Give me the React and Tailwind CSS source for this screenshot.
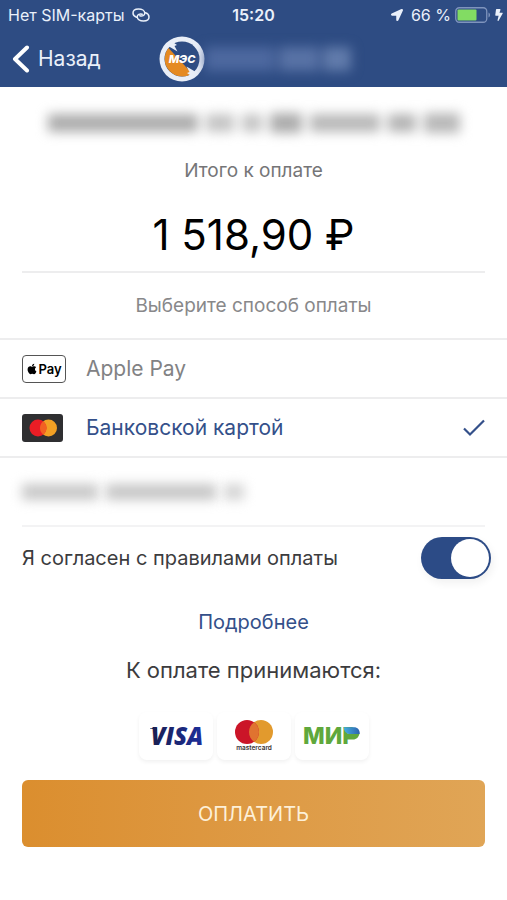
import React, { useState } from 'react';
import { FaApple, FaBolt, FaLocationArrow } from 'react-icons/fa';

function StatusBar() {
    return (
        <div className="grid grid-cols-3 items-center h-[30px] px-2 text-base">
            <div className="flex items-center gap-2 whitespace-nowrap">
                <span>Нет SIM-карты</span>
                <svg viewBox="0 0 18 14" className="w-[18px] h-[14px] shrink-0" fill="none" stroke="currentColor" strokeWidth="1.5" strokeLinecap="round">
                    <path d="M4.500 9.200C2.400 8.500 1 7 1 5 1 2.500 3.400 1 6.500 1c3.400 0 6.300 1.700 6.300 4.200 0 2.300-2.600 3.400-5 2.600" />
                    <path d="M13.500 4.800C15.600 5.500 17 7 17 9c0 2.500-2.400 4-5.500 4-3.400 0-6.300-1.700-6.300-4.200 0-2.300 2.600-3.400 5-2.600" />
                </svg>
            </div>
            <span className="text-center font-semibold">15:20</span>
            <div className="flex items-center justify-end gap-1 whitespace-nowrap -mr-1">
                <FaLocationArrow className="w-3 h-3 mr-1" />
                <span>66 %</span>
                <svg viewBox="0 0 36 16" className="w-9 h-4 shrink-0">
                    <rect x="0.750" y="0.750" width="31" height="14.500" rx="3.500" fill="none" stroke="#7f94bd" strokeWidth="1.300" />
                    <rect x="2.500" y="2.500" width="19" height="11" rx="1" fill="#82dc63" />
                    <path d="M33.500 5.500c2 .8 2 4.200 0 5z" fill="#7f94bd" />
                </svg>
                <FaBolt className="w-2 h-3" />
            </div>
        </div>
    );
}

function MesLogo() {
    return (
        <svg viewBox="0 0 46 46" className="w-[46px] h-[46px]" role="img" aria-label="МЭС">
            <circle cx="23" cy="23" r="22.500" fill="#e9eef7" />
            <circle cx="23" cy="23" r="17.500" fill="#2e4c83" />
            <path d="M9.500 12A17.500 17.500 0 0 0 33 37.400z" fill="#e58a22" />
            <path d="M8 10l5-4.500 5 3.500-2.500 1 3 5.500-8.500-5zM38 36l-5 4.500-5-3.500 2.500-1-3-5.500 8.500 5z" fill="#e9eef7" />
            <text x="23" y="27" textAnchor="middle" fontFamily="Inter, sans-serif" fontSize="11" fontWeight="800" fontStyle="italic" fill="#fff">МЭС</text>
        </svg>
    );
}

function CardIcon() {
    return (
        <svg viewBox="0 0 41 28" className="w-[41px] h-7">
            <rect width="41" height="28" rx="3" fill="#2f2f31" />
            <circle cx="26.500" cy="14" r="8.500" fill="#f2a024" />
            <circle cx="16" cy="14" r="8.500" fill="#ea1d25" />
            <path d="M21.250 7.300a8.500 8.500 0 0 1 0 13.400 8.500 8.500 0 0 1 0-13.400z" fill="#f26122" />
        </svg>
    );
}

function ApplePayIcon() {
    return (
        <span className="flex items-center justify-center w-11 h-7 border border-[#555] rounded text-black">
            <FaApple className="w-3 h-3" />
            <span className="text-[13px] leading-4 font-semibold">Pay</span>
        </span>
    );
}

function VisaLogo() {
    return (
        <svg viewBox="0 0 64 40" className="w-16 h-10" role="img" aria-label="Visa">
            <defs>
                <linearGradient id="visa" x1="0" x2="1">
                    <stop offset="0" stopColor="#191f4f" />
                    <stop offset="1" stopColor="#1c2f9c" />
                </linearGradient>
            </defs>
            <path d="M6 12h7v3c-2-1.300-4.500-2.200-7-2.500z" fill="#191f4f" />
            <text x="33" y="29" textAnchor="middle" fontFamily="'Open Sans', sans-serif" fontSize="24" fontWeight="800" fontStyle="italic" fill="url(#visa)">VISA</text>
        </svg>
    );
}

function MastercardLogo() {
    return (
        <svg viewBox="0 0 48 40" className="w-12 h-10" role="img" aria-label="Mastercard">
            <circle cx="31" cy="16" r="12" fill="#e29a2d" />
            <circle cx="17" cy="16" r="12" fill="#cb1528" />
            <path d="M24 6.250a12 12 0 0 1 0 19.500 12 12 0 0 1 0-19.500z" fill="#e07330" />
            <text x="24" y="34" textAnchor="middle" fontFamily="Inter, sans-serif" fontSize="6.500" fontWeight="600" fill="#3a3434">mastercard</text>
        </svg>
    );
}

function MirLogo() {
    return (
        <svg viewBox="0 0 66 40" className="w-[66px] h-10" role="img" aria-label="МИР">
            <defs>
                <linearGradient id="mir" x1="0" x2="1">
                    <stop offset="0" stopColor="#45b0e0" />
                    <stop offset="1" stopColor="#2c62ad" />
                </linearGradient>
            </defs>
            <text x="4" y="28" fontFamily="Inter, sans-serif" fontSize="23" fontWeight="800" fill="#5fa83c">МИР</text>
            <path d="M46 17.500h14.500c-.8 3.700-3 6-6.500 6h-8z" fill="#5fa83c" />
            <path d="M44.500 11.200H55c3.500 0 6 2.600 5.700 6.800H51c-3.500 0-5.800-2.600-6.500-6.800z" fill="url(#mir)" />
        </svg>
    );
}

const methods = [
    { id: 'apple', title: 'Apple Pay', icon: ApplePayIcon },
    { id: 'card', title: 'Банковской картой', icon: CardIcon },
];

const logos = [VisaLogo, MastercardLogo, MirLogo];

export default function App() {
    const [method, setMethod] = useState('card');
    const [agreed, setAgreed] = useState(true);

    return (
        <div className="min-h-screen bg-white font-['Inter','Noto_Sans',sans-serif] text-[#3c3c3e] overflow-x-hidden">
            <header className="bg-[#2e4c83] text-[#eaf0fa]">
                <StatusBar />
                <div className="flex items-center h-[57px] pl-3">
                    <button type="button" className="flex items-center gap-2 w-[147px] text-[21px] leading-7">
                        <svg viewBox="0 0 18 28" className="w-[18px] h-7" fill="none" stroke="#fff" strokeWidth="4" strokeLinecap="round" strokeLinejoin="round">
                            <path d="M15 2.500L3 14l12 11.500" />
                        </svg>
                        Назад
                    </button>
                    <MesLogo />
                    {/* hidden account number */}
                    <div className="flex gap-1 blur-[6px]" aria-hidden="true">
                        <span className="w-[70px] h-6 bg-[#4d689f]" />
                        <span className="w-10 h-6 bg-[#5872a5]" />
                        <span className="w-7 h-6 bg-[#617bab]" />
                    </div>
                </div>
            </header>

            <main>
                <section className="mx-[22px] pt-6 text-center border-b-2 border-[#ededee]">
                    {/* hidden address */}
                    <div className="flex items-center justify-center gap-2 h-6 blur-[6px]" aria-hidden="true">
                        <span className="w-[150px] h-[18px] bg-[#acacac]" />
                        <span className="w-7 h-[18px] bg-[#c4c4c4]" />
                        <span className="w-5 h-[18px] bg-[#c4c4c4]" />
                        <span className="w-8 h-5 bg-[#acacac]" />
                        <span className="w-[70px] h-[18px] bg-[#b8b8b8]" />
                        <span className="w-7 h-[18px] bg-[#b4b4b4]" />
                        <span className="w-9 h-5 bg-[#b8b8b8]" />
                    </div>
                    <p className="mt-6 text-[19px] leading-6 text-[#757577]">Итого к оплате</p>
                    <p className="mt-5 mb-1 text-[42px] leading-[64px] text-black">1 518,90 ₽</p>
                </section>

                <fieldset>
                    <legend className="w-full h-[65px] text-center text-[19px] leading-[66px] text-[#88888a]">Выберите способ оплаты</legend>
                    {methods.map(({ id, title, icon: Icon }) => (
                        <label
                            key={id}
                            className={
                                'flex items-center h-[59px] px-[22px] border-t-2 border-[#ededee] text-[21px] cursor-pointer ' +
                                (method === id ? 'text-[#34508a]' : 'text-[#828284]')
                            }
                        >
                            <input type="radio" name="method" className="sr-only" checked={method === id} onChange={() => setMethod(id)} />
                            <span className="w-16"><Icon /></span>
                            <span className="flex-1">{title}</span>
                            {method === id && (
                                <svg viewBox="0 0 22 18" className="w-[22px] h-[18px]" fill="none" stroke="currentColor" strokeWidth="2.200">
                                    <path d="M1 9.500l6 6L21 1.500" />
                                </svg>
                            )}
                        </label>
                    ))}
                </fieldset>

                <div className="border-t-2 border-[#ededee] px-[22px]">
                    {/* hidden e-mail */}
                    <div className="flex items-center gap-2 h-[69px] border-b-2 border-[#f3f3f4]" aria-hidden="true">
                        <span className="w-[76px] h-4 bg-[#c8c8c8] blur-[6px]" />
                        <span className="w-[110px] h-4 bg-[#c6c6c6] blur-[6px]" />
                        <span className="w-5 h-4 bg-[#d4d4d4] blur-[6px]" />
                    </div>
                </div>

                <div className="flex items-center justify-between h-[61px] pl-[22px] pr-4">
                    <label htmlFor="agree" className="text-xl">Я согласен с правилами оплаты</label>
                    <input
                        id="agree"
                        type="checkbox"
                        role="switch"
                        checked={agreed}
                        onChange={(e) => setAgreed(e.target.checked)}
                        className="appearance-none w-[70px] h-[42px] p-0.5 rounded-full bg-gray-300 checked:bg-[#2c4b86] flex checked:justify-end cursor-pointer shadow-[2px_4px_8px_rgba(0,0,0,0.06)] before:block before:w-[38px] before:h-[38px] before:rounded-full before:bg-white"
                    />
                </div>

                <section className="px-[22px] pt-5 text-center">
                    <a href="#rules" className="block text-xl leading-7 text-[#34508a]">Подробнее</a>
                    <h2 className="mt-5 text-[22px] leading-7">К оплате принимаются:</h2>
                    <div className="flex justify-center gap-1 mt-7">
                        {logos.map((Logo, i) => (
                            <div key={i} className="flex items-center justify-center w-[74px] h-12 rounded-lg shadow-[0_2px_4px_rgba(0,0,0,0.06)]">
                                <Logo />
                            </div>
                        ))}
                    </div>
                    <button
                        type="button"
                        disabled={!agreed}
                        className="w-full h-[67px] mt-5 mb-8 rounded-md bg-linear-to-r from-[#db8e2e] to-[#e0a556] text-xl text-[#fdf0d8] disabled:opacity-60"
                    >
                        ОПЛАТИТЬ
                    </button>
                </section>
            </main>
        </div>
    );
}
